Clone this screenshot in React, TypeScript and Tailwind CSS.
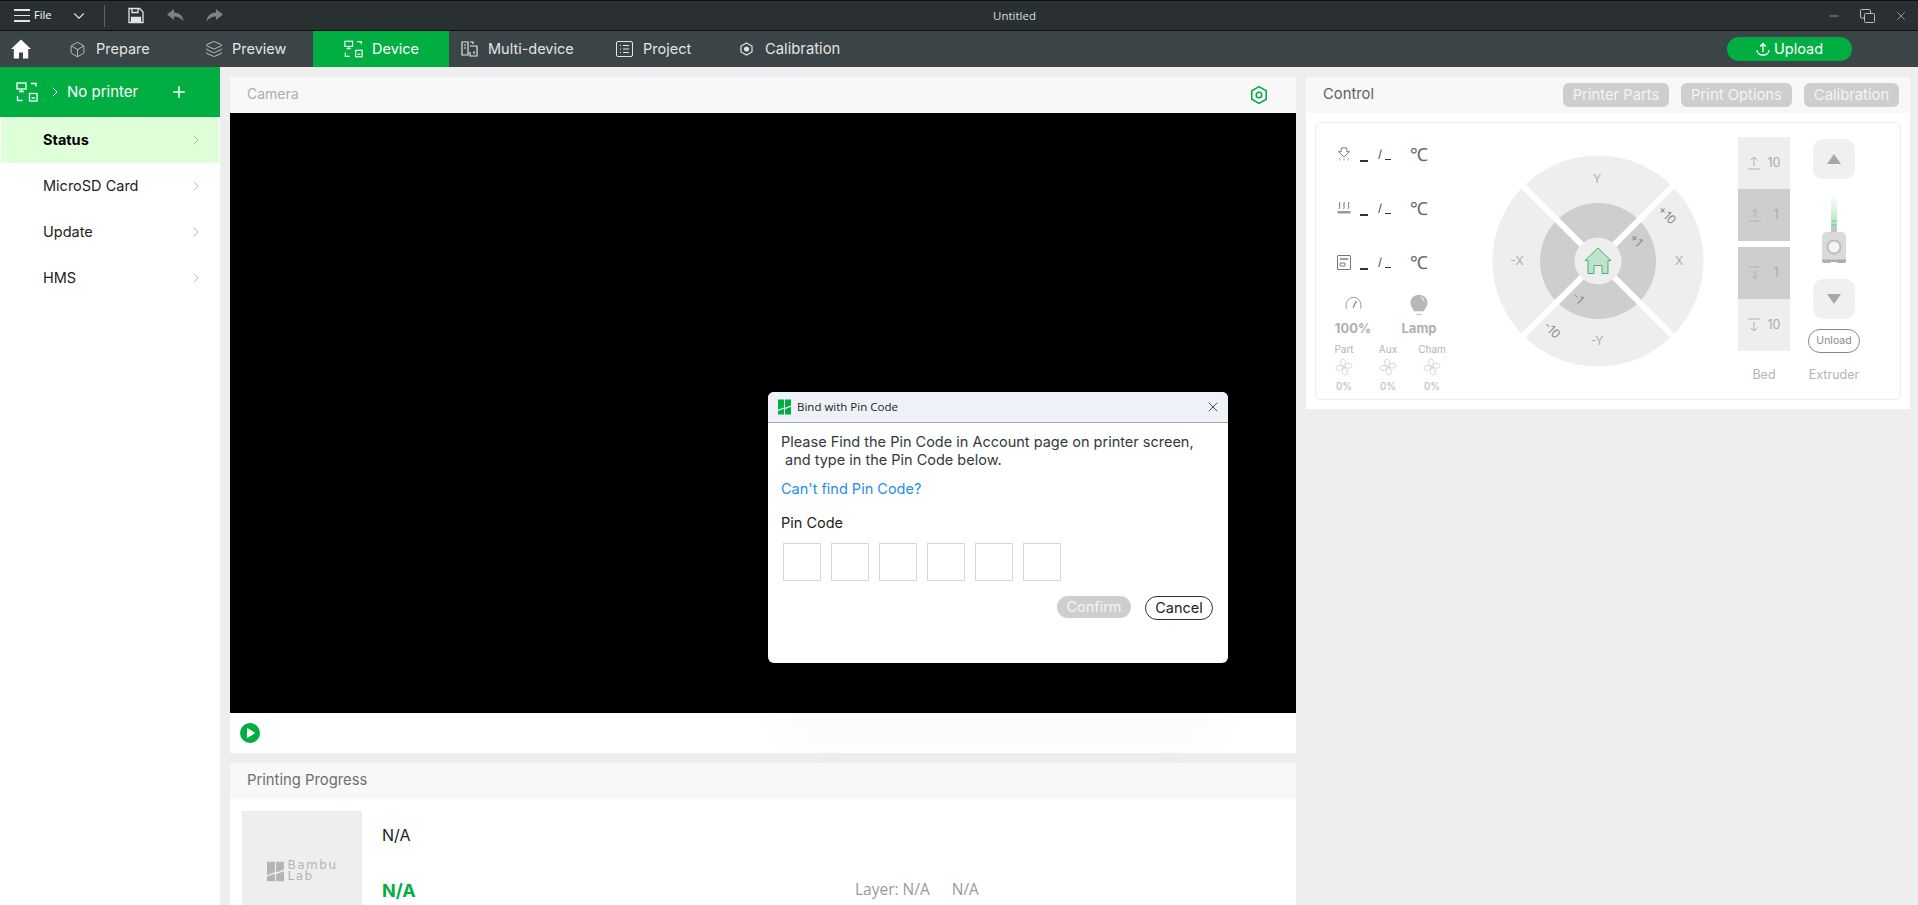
import { Box, ChevronDown, ChevronRight, Layers, Plus, X, Minus } from 'lucide-react';

function DeviceIcon({ className }: { className?: string }) {
  return (
    <svg viewBox="0 0 22 20" fill="none" stroke="currentColor" strokeWidth="1.3" className={className}>
      <rect x="1" y="1" width="9" height="6" />
      <path d="M5.5 7v2.5M3 9.5h5" />
      <path d="M15 1.5h5v3M1.5 14v4.5h5" />
      <rect x="13.5" y="11.5" width="7.5" height="7.5" />
      <path d="M15.5 16h3.5" />
    </svg>
  );
}

function BambuMark({ className }: { className?: string }) {
  return (
    <svg viewBox="0 0 14 16" className={className}>
      <path fill="currentColor" d="M0 0h6.5v8.5L0 11zM7.5 0H14v6.3L7.5 8.8zM7.5 10.3L14 7.8V16H7.5zM0 12.2l6.5-2.4V16H0z" />
    </svg>
  );
}

function FanIcon() {
  return (
    <svg viewBox="0 0 20 20" fill="none" stroke="#c4c4c4" strokeWidth="0.8" className="h-[18px] w-[18px]">
      <path d="M9.5 9C6 8 5.5 3.5 7.5 1.5c3-1 5.5 1.5 3.5 7z" />
      <path d="M11 9c1-3.5 5.5-4 7.5-2 1 3-1.5 5.5-7.5 3.5z" />
      <path d="M10.5 11c3.5 1 4 5.500 2 7.500-3 1-5.500-1.500-3.500-7.500z" />
      <path d="M9 10.500c-1 3.500-5.500 4-7.500 2-1-3 1.500-5.500 7.500-3.500z" />
    </svg>
  );
}

function Wheel() {
  return (
    <svg viewBox="0 0 212 212" className="h-[212px] w-[212px] shrink-0">
      <circle cx="106" cy="106" r="105.5" fill="#eeeeee" />
      <circle cx="106" cy="106" r="58" fill="#cecece" />
      <path d="M28 28L184 184M184 28L28 184" stroke="#ffffff" strokeWidth="6" />
      <circle cx="106" cy="106" r="23.5" fill="#eeeeee" />
      <path
        d="M106 93L119 105.5L116 105.5V118.5H110V110.5H102V118.5H96V105.5L93 105.5Z"
        fill="#bfe3cb"
        stroke="#45b36f"
        strokeWidth="1"
        strokeLinejoin="round"
      />
      <g fontFamily="Inter, sans-serif" fontSize="12" fill="#aeaeae" textAnchor="middle">
        <text x="105" y="28">Y</text>
        <text x="105" y="190">-Y</text>
        <text x="25" y="110">-X</text>
        <text x="187" y="110">X</text>
      </g>
      <g fontFamily="Inter, sans-serif" fontSize="12" fill="#8a8a8a" textAnchor="middle">
        <text transform="translate(172 63) rotate(45)">+10</text>
        <text transform="translate(141 88) rotate(45)">+1</text>
        <text transform="translate(83 146) rotate(45)">-1</text>
        <text transform="translate(57 178) rotate(45)">-10</text>
      </g>
    </svg>
  );
}

function ArrowUpBar() {
  return (
    <svg viewBox="0 0 12 14" fill="none" stroke="#b0b0b0" strokeWidth="1" className="h-[14px] w-[12px]">
      <path d="M6 10V1M2.5 4.5L6 1l3.5 3.5M0.5 13h11" />
    </svg>
  );
}

function ArrowDownBar() {
  return (
    <svg viewBox="0 0 12 14" fill="none" stroke="#b0b0b0" strokeWidth="1" className="h-[14px] w-[12px]">
      <path d="M6 4v9M2.5 9.5L6 13l3.5-3.5M0.5 1h11" />
    </svg>
  );
}

function ExtruderIcon() {
  return (
    <svg viewBox="0 0 26 68" className="h-[68px] w-[26px]">
      <defs>
        <linearGradient id="filament" x1="0" y1="0" x2="0" y2="1">
          <stop offset="0" stopColor="#ffffff" />
          <stop offset="0.5" stopColor="#d6f3df" />
          <stop offset="1" stopColor="#9fe2b6" />
        </linearGradient>
      </defs>
      <rect x="10" y="0" width="6" height="32" fill="url(#filament)" />
      <path d="M11 25l2 2 2-2M11 29l2 2 2-2" stroke="#50b878" strokeWidth="0.7" fill="none" />
      <rect x="10" y="32" width="6" height="5" fill="#c4c4c4" />
      <path d="M1 42a5 5 0 0 1 5-5h14a5 5 0 0 1 5 5v23H1z" fill="#dadada" />
      <circle cx="13" cy="52" r="6.5" fill="#f4f4f4" stroke="#bdbdbd" strokeWidth="2" />
      <path d="M1 64.5h24v1.5a2 2 0 0 1-2 2h-5a2 2 0 0 1-2-1h-6a2 2 0 0 1-2 1H3a2 2 0 0 1-2-2z" fill="#adadad" />
    </svg>
  );
}

const navItems = [
  { label: 'Prepare', tab: 'w-[136px] pl-[28px] gap-[10px]', icon: <Box className="h-[17px] w-[17px]" strokeWidth={1} /> },
  { label: 'Preview', tab: 'w-[136px] pl-[28px] gap-[9px]', icon: <Layers className="h-[18px] w-[18px]" strokeWidth={1} /> },
  { label: 'Device', tab: 'w-[136px] pl-[31px] gap-[9px] bg-[#00ae42] text-white', icon: <DeviceIcon className="h-[18px] w-[19px]" /> },
  {
    label: 'Multi-device',
    tab: 'w-[136px] pl-[12px] gap-[10px]',
    icon: (
      <svg viewBox="0 0 17 16" fill="none" stroke="currentColor" strokeWidth="1.2" className="h-[16px] w-[17px]">
        <path d="M1 1h6v13H1zM3 4h2M3 7h2M9 5h7v10H9V11M9 1h3v2" />
        <path d="M13 10v3" />
      </svg>
    ),
  },
  {
    label: 'Project',
    tab: 'w-[136px] pl-[31px] gap-[10px]',
    icon: (
      <svg viewBox="0 0 17 16" fill="none" stroke="currentColor" strokeWidth="1" className="h-[16px] w-[17px]">
        <rect x="0.5" y="0.5" width="16" height="15" rx="1.5" />
        <path d="M4 4.5h1M7 4.5h6M4 8h1M7 8h6M4 11.5h1M7 11.5h6" />
      </svg>
    ),
  },
  {
    label: 'Calibration',
    tab: 'pl-[19px] gap-[12px] text-[14.8px]',
    icon: (
      <svg viewBox="0 0 13 14" fill="none" stroke="currentColor" strokeWidth="1.2" className="h-[14px] w-[13px]">
        <path d="M6.5 1L12 4v6l-5.5 3L1 10V4z" />
        <circle cx="6.5" cy="7" r="2" fill="currentColor" />
      </svg>
    ),
  },
];

const sideItems = ['Status', 'MicroSD Card', 'Update', 'HMS'];

const tempIcons = [
  <svg key="nozzle" viewBox="0 0 14 16" fill="none" stroke="#666" strokeWidth="0.9" className="h-[15px] w-[14px]">
    <path d="M4 1h6v4h3L7 10.5 1 5h3z" />
    <path d="M2.5 12v3M7 12v3M11.5 12v3" strokeDasharray="1.5 1" />
  </svg>,
  <svg key="bed" viewBox="0 0 14 14" fill="none" stroke="#666" strokeWidth="0.9" className="h-[14px] w-[14px]">
    <path d="M2.5 1c1 1.5-1 2.5 0 4s-1 2 0 3M7 1c1 1.5-1 2.5 0 4s-1 2 0 3M11.5 1c1 1.500-1 2.500 0 4s-1 2 0 3" />
    <rect x="0.5" y="10" width="13" height="2.5" fill="#999" strokeWidth="0" />
  </svg>,
  <svg key="chamber" viewBox="0 0 14 15" fill="none" stroke="#666" strokeWidth="0.9" className="h-[15px] w-[14px]">
    <rect x="0.5" y="0.5" width="13" height="14" rx="0.5" />
    <path d="M3 4h8" strokeWidth="1.3" />
    <rect x="3" y="8" width="5" height="3" rx="0.5" />
  </svg>,
];

export default function App() {
  return (
    <div className="relative flex h-[905px] w-[1918px] flex-col overflow-hidden bg-[#eeeeee] font-['Inter',sans-serif]">
      {/* title bar */}
      <div className="relative flex h-[31px] shrink-0 items-center border-y border-y-[#111] bg-[#283032] text-[#dcdcdc]">
        <div className="ml-[14px] flex flex-col gap-[4px]">
          <span className="h-[1.5px] w-[16px] bg-[#e4e4e4]" />
          <span className="h-[1.5px] w-[16px] bg-[#e4e4e4]" />
          <span className="h-[1.5px] w-[16px] bg-[#e4e4e4]" />
        </div>
        <span className="ml-[4px] font-['Open_Sans',sans-serif] text-[11px] text-white">File</span>
        <ChevronDown className="ml-[19px] h-[18px] w-[18px]" strokeWidth={1.5} />
        <span className="ml-[16px] h-[22px] w-px bg-[#5c6365]" />
        <svg viewBox="0 0 16 16" fill="none" stroke="#e4e4e4" strokeWidth="1.3" className="ml-[23px] h-[17px] w-[16px]">
          <path d="M1 1h10.5L15 4.5V15H1z" />
          <path d="M4 1v4h6V1" />
          <path d="M3.5 15v-5h9v5" fill="#e4e4e4" />
        </svg>
        <svg viewBox="0 0 17 13" fill="#7b8385" className="ml-[23px] h-[13px] w-[17px]">
          <path d="M7 0L0 5.5 7 11V7.5c4 0 7 1.5 9.5 5C16 7 12.5 3.5 7 3.5z" />
        </svg>
        <svg viewBox="0 0 17 13" fill="#7b8385" className="ml-[22px] h-[13px] w-[17px]">
          <path d="M10 0l7 5.5L10 11V7.5c-4 0-7 1.5-9.5 5C1 7 4.5 3.5 10 3.5z" />
        </svg>
        <span className="absolute left-[993px] font-['Open_Sans',sans-serif] text-[11.5px] text-[#dcdcdc]">Untitled</span>
        <div className="ml-auto mr-[10px] flex items-center gap-[19px]">
          <Minus className="h-[14px] w-[14px]" strokeWidth={1} />
          <svg viewBox="0 0 15 14" fill="none" stroke="#b8bcbd" strokeWidth="1" className="h-[14px] w-[15px]">
            <rect x="0.5" y="0.5" width="10" height="8.5" rx="1" />
            <rect x="4.5" y="4.5" width="10" height="9" rx="1" fill="#283032" />
          </svg>
          <X className="h-[14px] w-[14px]" strokeWidth={1} />
        </div>
      </div>

      {/* nav bar */}
      <div className="flex h-[36px] shrink-0 items-stretch bg-[#3b4446] text-[14.5px] text-[#e4e4e4]">
        <div className="flex w-[41px] items-center pl-[11px]">
          <svg viewBox="0 0 20 20" fill="#ffffff" className="h-[20px] w-[20px]">
            <path d="M10 0.5L0 10h2.8v9.5H8v-6h4v6h5.2V10H20z" />
          </svg>
        </div>
        {navItems.map((item) => (
          <div key={item.label} className={`flex items-center ${item.tab}`}>
            {item.icon}
            <span>{item.label}</span>
          </div>
        ))}
        <div className="ml-auto mr-[66px] flex items-center">
          <div className="flex h-[24px] w-[125px] items-center justify-center gap-[4px] rounded-full bg-[#00ae42] text-[14.5px] text-white">
            <svg viewBox="0 0 14 14" fill="none" stroke="#fff" strokeWidth="1.3" className="h-[14px] w-[14px]">
              <path d="M7 10V1.5M4 4.5L7 1.5l3 3M1 8c0 3 2.5 5 6 5s6-2 6-5" />
            </svg>
            Upload
          </div>
        </div>
      </div>

      <div className="flex min-h-0 flex-1">
        {/* sidebar */}
        <div className="w-[220px] shrink-0 bg-white">
          <div className="flex h-[50px] items-center bg-[#00ae42] pl-[16px] text-[15px] text-white">
            <DeviceIcon className="h-[20px] w-[22px]" />
            <ChevronRight className="ml-[9px] h-[16px] w-[16px]" strokeWidth={1.5} />
            <span className="ml-[4px]">No printer</span>
            <Plus className="ml-[32px] h-[18px] w-[18px]" strokeWidth={2} />
          </div>
          {sideItems.map((name, i) => (
            <div
              key={name}
              className={
                i === 0
                  ? 'mx-px flex h-[46px] items-center bg-[#dfffd9] pl-[42px] pr-[15px] text-[14.5px] font-bold text-black'
                  : 'mx-px flex h-[46px] items-center pl-[42px] pr-[15px] text-[14.5px] text-[#222]'
              }
            >
              <span>{name}</span>
              <ChevronRight className="ml-auto h-[16px] w-[16px] text-[#999]" strokeWidth={1} />
            </div>
          ))}
        </div>

        {/* camera and progress */}
        <div className="ml-[10px] flex w-[1066px] shrink-0 flex-col pt-[10px]">
          <div className="flex h-[36px] shrink-0 items-center justify-between bg-[#f8f8f8] pl-[17px] pr-[27px] text-[14px] text-[#acacac]">
            <span className="mb-[3px]">Camera</span>
            <svg viewBox="0 0 18 18" fill="none" stroke="#00ae42" strokeWidth="1.4" className="h-[20px] w-[20px]">
              <path d="M9 1.5L15.5 5.2v7.600L9 16.5l-6.500-3.700V5.200z" />
              <circle cx="9" cy="9" r="2.5" />
            </svg>
          </div>
          <div className="h-[600px] shrink-0 bg-black" />
          <div className="flex h-[40px] shrink-0 items-center bg-white pl-[10px]">
            <svg viewBox="0 0 20 20" className="h-[20px] w-[20px]">
              <circle cx="10" cy="10" r="10" fill="#00ae42" />
              <path d="M7.5 5.5L14.5 10L7.5 14.5Z" fill="#fff" stroke="#fff" strokeLinejoin="round" />
            </svg>
          </div>
          <div className="mt-[10px] flex h-[36px] shrink-0 items-center bg-[#f8f8f8] pl-[17px] text-[14.8px] text-[#6f6f6f]">
            <span className="mb-[2px]">Printing Progress</span>
          </div>
          <div className="flex min-h-0 flex-1 bg-white pl-[12px] pt-[12px]">
            <div className="flex h-[120px] w-[120px] shrink-0 items-center justify-center gap-[4px] bg-[#eeeeee] text-[#b4b4b4]">
              <BambuMark className="h-[21px] w-[17px]" />
              <div className="font-['DejaVu_Sans',sans-serif] text-[12px] tracking-[1.5px]">
                <div className="leading-[11px]">Bambu</div>
                <div className="leading-[11px]">Lab</div>
              </div>
            </div>
            <div className="ml-[20px] w-[473px] shrink-0">
              <div className="mt-[13px] text-[16px] leading-[22px] text-[#222]">N/A</div>
              <div className="mt-[33px] text-[18px] font-bold leading-[24px] text-[#00ae42]">N/A</div>
            </div>
            <div className="mt-[68px] flex gap-[22px] font-['Open_Sans',sans-serif] text-[15.5px] leading-[20px] text-[#9a9a9a]">
              <span>Layer: N/A</span>
              <span>N/A</span>
            </div>
          </div>
        </div>

        {/* control */}
        <div className="ml-[10px] w-[604px] shrink-0 pt-[10px]">
          <div className="flex h-[36px] items-center bg-[#f8f8f8] pl-[17px] pr-[11px] text-[14.8px] text-[#5f5f5f]">
            <span className="mb-[2px]">Control</span>
            <div className="ml-auto flex gap-[12px] text-[14.8px] text-[#f4f4f4]">
              <span className="flex h-[24px] w-[106px] items-center justify-center rounded-[6px] bg-[#cecece]">Printer Parts</span>
              <span className="flex h-[24px] w-[111px] items-center justify-center rounded-[6px] bg-[#cecece]">Print Options</span>
              <span className="flex h-[24px] w-[95px] items-center justify-center rounded-[6px] bg-[#cecece]">Calibration</span>
            </div>
          </div>
          <div className="h-[296px] bg-white px-[9px] pt-[9px]">
            <div className="flex h-[278px] w-[586px] rounded-[4px] border border-[#eeeeee]">
              {/* temperatures */}
              <div className="w-[176px] shrink-0 pt-[4px]">
                {tempIcons.map((icon, i) => (
                  <div key={i} className="flex h-[54px] items-center pl-[21px] text-[#333]">
                    <span className="flex w-[14px] justify-center">{icon}</span>
                    <span className="ml-[9px] mt-[14px] h-[2px] w-[8px] bg-[#333]" />
                    <span className="ml-[10px] text-[11px] leading-[14px] text-[#333]">/</span>
                    <span className="ml-[3px] mt-[10px] h-px w-[6px] bg-[#333]" />
                    <span className="ml-[19px] font-['Open_Sans',sans-serif] text-[18px] leading-[24px] text-[#666]">℃</span>
                  </div>
                ))}
                <div className="flex pl-[4px] pt-[5px] text-[13px] font-bold text-[#b0b0b0]">
                  <div className="flex w-[66px] flex-col items-center">
                    <div className="flex h-[22px] items-start pt-[2px]">
                      <svg viewBox="0 0 18 14" fill="none" stroke="#888" strokeWidth="0.9" className="h-[14px] w-[17px]">
                        <path d="M1.5 13C-0.5 5 5 1 9 1s9.5 4 7.5 12" />
                        <path d="M12 5L8.5 12" strokeWidth="1.4" />
                      </svg>
                    </div>
                    <span className="mt-[4px] leading-[16px]">100%</span>
                  </div>
                  <div className="flex w-[66px] flex-col items-center">
                    <svg viewBox="0 0 20 24" className="h-[22px] w-[18px]">
                      <path d="M10 0.5C4.5 0.5 0.5 4.5 0.5 9.5c0 4 2.5 5.5 4 9.5h11c1.5-4 4-5.5 4-9.500 0-5-4-9-9.500-9z" fill="#b8b8b8" />
                      <path d="M7 22.5h6" stroke="#c8c8c8" strokeWidth="1.5" />
                      <path d="M12 3.5c2 .5 3.5 2 3.5 4.5" stroke="#fff" fill="none" />
                    </svg>
                    <span className="mt-[4px] leading-[16px]">Lamp</span>
                  </div>
                </div>
                <div className="mt-[7px] flex pl-[6px] text-[10px] text-[#b4b4b4]">
                  {['Part', 'Aux', 'Cham'].map((fan) => (
                    <div key={fan} className="flex w-[44px] flex-col items-center">
                      <span className="leading-[12px]">{fan}</span>
                      <span className="mt-[3px] flex"><FanIcon /></span>
                      <span className="mt-[4px] leading-[12px]">0%</span>
                    </div>
                  ))}
                </div>
              </div>

              <div className="pt-[32px]">
                <Wheel />
              </div>

              {/* bed */}
              <div className="ml-[34px] flex w-[52px] shrink-0 flex-col pt-[14px] text-[12.5px] text-[#aaa]">
                <div className="flex h-[52px] items-center justify-center gap-[8px] bg-[#eeeeee]"><ArrowUpBar />10</div>
                <div className="flex h-[52px] items-center justify-center gap-[12px] bg-[#cecece]"><ArrowUpBar />1</div>
                <div className="mt-[6px] flex h-[52px] items-center justify-center gap-[12px] bg-[#cecece]"><ArrowDownBar />1</div>
                <div className="flex h-[52px] items-center justify-center gap-[8px] bg-[#eeeeee]"><ArrowDownBar />10</div>
                <div className="mt-[15px] text-center text-[12.5px] leading-[18px] text-[#b4b4b4]">Bed</div>
              </div>

              {/* extruder */}
              <div className="ml-[18px] flex w-[52px] shrink-0 flex-col items-center pt-[16px]">
                <div className="flex h-[40px] w-[42px] items-center justify-center rounded-[10px] bg-[#f0f0f0]">
                  <span className="h-0 w-0 border-x-[7.5px] border-b-[10px] border-x-transparent border-b-[#a8a8a8]" />
                </div>
                <div className="mt-[16px] flex">
                  <ExtruderIcon />
                </div>
                <div className="mt-[16px] flex h-[40px] w-[42px] items-center justify-center rounded-[10px] bg-[#f0f0f0]">
                  <span className="h-0 w-0 border-x-[7.5px] border-t-[10px] border-x-transparent border-t-[#a8a8a8]" />
                </div>
                <div className="mt-[10px] flex h-[24px] w-[52px] items-center justify-center rounded-full border border-[#888] text-[10.5px] text-[#888]">
                  Unload
                </div>
                <div className="mt-[13px] whitespace-nowrap text-[12.5px] leading-[18px] text-[#b4b4b4]">Extruder</div>
              </div>
            </div>
          </div>
        </div>
      </div>

      {/* pin code dialog */}
      <div className="absolute left-[768px] top-[392px] h-[271px] w-[460px] overflow-hidden rounded-[6px] bg-white">
        <div className="flex h-[31px] items-center border-b border-[#a8a8a8] bg-[#eef2f8] pl-[10px] pr-[7px]">
          <BambuMark className="h-[16px] w-[13px] text-[#00ae42]" />
          <span className="ml-[6px] font-['Open_Sans',sans-serif] text-[11.5px] text-[#222]">Bind with Pin Code</span>
          <X className="ml-auto h-[16px] w-[16px] text-[#222]" strokeWidth={1.2} />
        </div>
        <div className="px-[13px]">
          <p className="mt-[10px] text-[14.5px] leading-[18px] text-[#323a3d]">
            Please Find the Pin Code in Account page on printer screen,
            <br />
            <span className="ml-[4px]">and type in the Pin Code below.</span>
          </p>
          <div className="mt-[11px] text-[14.5px] leading-[18px] text-[#1f8eea]">Can't find Pin Code?</div>
          <div className="mt-[16px] text-[14.5px] leading-[18px] text-[#222]">Pin Code</div>
          <div className="mt-[11px] flex gap-[10px] pl-[2px]">
            {[0, 1, 2, 3, 4, 5].map((n) => (
              <div key={n} className="h-[38px] w-[38px] border border-[#d8d8d8]" />
            ))}
          </div>
          <div className="mt-[15px] flex justify-end gap-[14px] pr-[2px] text-[14.5px]">
            <div className="flex h-[22px] w-[74px] items-center justify-center rounded-full bg-[#cecece] text-[#f4f4f4]">Confirm</div>
            <div className="flex h-[24px] w-[68px] items-center justify-center rounded-full border border-[#333] text-[#222]">Cancel</div>
          </div>
        </div>
      </div>
      {/* soft shadow the dialog leaves under the camera */}
      <div className="absolute left-[780px] top-[640px] h-[60px] w-[440px] rounded-full shadow-[0_45px_50px_rgba(0,0,0,0.025)]" />
    </div>
  );
}
